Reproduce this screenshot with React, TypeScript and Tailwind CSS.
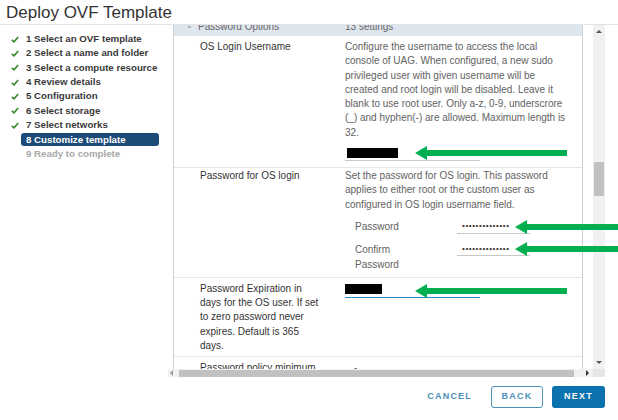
import React from "react";

const steps = [
  { label: "1 Select an OVF template", state: "done" },
  { label: "2 Select a name and folder", state: "done" },
  { label: "3 Select a compute resource", state: "done" },
  { label: "4 Review details", state: "done" },
  { label: "5 Configuration", state: "done" },
  { label: "6 Select storage", state: "done" },
  { label: "7 Select networks", state: "done" },
  { label: "8 Customize template", state: "active" },
  { label: "9 Ready to complete", state: "todo" },
];

const Check = () => (
  <svg width="8" height="7" viewBox="0 0 8 7" className="shrink-0">
    <path d="M0.8 3.8 L3 5.8 L7.2 1" fill="none" stroke="#3a8c2f" strokeWidth="1.7" />
  </svg>
);

// green annotation arrow pointing left
const Arrow = ({ width, className }: { width: number; className: string }) => (
  <svg width={width} height="14" viewBox={`0 0 ${width} 14`} className={`absolute ${className}`}>
    <polygon points="0,7 12,0 12,14" fill="#00b050" />
    <rect x="11" y="4" width={width - 11} height="6" fill="#00b050" />
  </svg>
);

const Dots = () => (
  <span className="text-[8px] tracking-[0.6px] text-[#333] leading-none">••••••••••••••</span>
);

export default function App() {
  return (
    <div className="relative w-[618px] h-[420px] overflow-hidden bg-white font-['Liberation_Sans',Arial,sans-serif] text-[#626262]">
      <div className="h-[25px] pl-[6px] text-[17px] leading-[25px] text-[#333] border-b border-[#e4e4e4]">
        Deploy OVF Template
      </div>

      <div className="flex h-[352px]">
        <nav className="w-[168px] pt-[7px]">
          {steps.map((s) =>
            s.state === "active" ? (
              <div key={s.label} className="h-[14.33px] flex items-center">
                <div className="ml-[21px] w-[138px] h-[13.5px] rounded-[3px] bg-[#1c4b78] pl-[5px] text-[9.7px] font-bold leading-[13.5px] text-white whitespace-nowrap">
                  {s.label}
                </div>
              </div>
            ) : (
              <div key={s.label} className="h-[14.33px] flex items-center pl-[11px] text-[9.7px] font-bold">
                {s.state === "done" ? <Check /> : <span className="w-[8px]" />}
                <span className={`ml-[7px] whitespace-nowrap ${s.state === "done" ? "text-[#3a3a3a]" : "text-[#a9a9a9]"}`}>
                  {s.label}
                </span>
              </div>
            )
          )}
        </nav>

        <div className="flex-1 flex flex-col">
          <div className="flex h-[344px]">
            <div className="ml-[5px] w-[410px] border-x border-[#cfcfcf] overflow-hidden text-[10px]">
              <div className="-mt-[9px]">
                <div className="h-[20px] bg-[#dfe7ee] flex items-center text-[#666]">
                  <span className="w-[24px] pl-[12px] text-[8px] text-[#888]">⌄</span>
                  <span className="w-[147px]">Password Options</span>
                  <span>13 settings</span>
                </div>

                <div className="grid grid-cols-[171px_1fr] pt-[4px] pb-[6px] border-b border-[#e6e6e6] leading-[14.3px]">
                  <div className="pl-[26px] text-[#333]">OS Login Username</div>
                  <div className="whitespace-nowrap">
                    <div>Configure the username to access the local</div>
                    <div>console of UAG. When configured, a new sudo</div>
                    <div>privileged user with given username will be</div>
                    <div>created and root login will be disabled. Leave it</div>
                    <div>blank to use root user. Only a-z, 0-9, underscrore</div>
                    <div>(_) and hyphen(-) are allowed. Maximum length is</div>
                    <div>32.</div>
                    <div className="mt-[6px] w-[135px] h-[15px] border-b border-[#c8c8c8] pt-[2px] pl-[2px]">
                      <div className="w-[51px] h-[10px] bg-black" />
                    </div>
                  </div>
                </div>

                <div className="grid grid-cols-[171px_1fr] pt-[1px] pb-[5px] border-b border-[#e6e6e6] leading-[14.3px]">
                  <div className="pl-[26px] text-[#333]">Password for OS login</div>
                  <div className="whitespace-nowrap">
                    <div>Set the password for OS login. This password</div>
                    <div>applies to either root or the custom user as</div>
                    <div>configured in OS login username field.</div>
                    <div className="mt-[8px] ml-[10px] flex flex-col gap-[9px]">
                      <div className="flex">
                        <div className="w-[102px]">Password</div>
                        <div className="w-[73px] h-[14px] border-b border-[#c8c8c8] pl-[5px] flex items-center">
                          <Dots />
                        </div>
                      </div>
                      <div className="flex">
                        <div className="w-[102px] whitespace-normal">
                          <div>Confirm</div>
                          <div>Password</div>
                        </div>
                        <div className="w-[73px] h-[13px] border-b border-[#c8c8c8] pl-[5px] flex items-center">
                          <Dots />
                        </div>
                      </div>
                    </div>
                  </div>
                </div>

                <div className="grid grid-cols-[171px_1fr] pt-[4px] pb-[3px] border-b border-[#e6e6e6] leading-[14.3px]">
                  <div className="pl-[26px] text-[#333] whitespace-nowrap">
                    <div>Password Expiration in</div>
                    <div>days for the OS user. If set</div>
                    <div>to zero password never</div>
                    <div>expires. Default is 365</div>
                    <div>days.</div>
                  </div>
                  <div>
                    <div className="w-[135px] h-[16px] border-b border-[#2d8bc4] pt-[2px]">
                      <div className="w-[37px] h-[10px] bg-black" />
                    </div>
                  </div>
                </div>

                <div className="grid grid-cols-[171px_1fr] pt-[4px] leading-[14.3px]">
                  <div className="pl-[26px] text-[#333] whitespace-nowrap">Password policy minimum</div>
                  <div className="pl-[9px]">-</div>
                </div>
              </div>
            </div>

            <div className="ml-[10px] w-[12px] bg-[#f1f1f1] flex flex-col items-center justify-between py-[5px]">
              <span className="w-0 h-0 border-x-[3px] border-x-transparent border-b-[3px] border-b-[#555]" />
              <div className="flex-1 w-full flex flex-col pt-[129px]">
                <div className="mx-[1px] h-[34px] bg-[#c1c1c1]" />
              </div>
              <span className="w-0 h-0 border-x-[3px] border-x-transparent border-t-[3px] border-t-[#555]" />
            </div>
          </div>

          <div className="flex h-[8px]">
            <div className="w-[425px] bg-[#f1f1f1] flex items-center pl-[2px] pr-[4px]">
              <span className="w-0 h-0 border-y-[3px] border-y-transparent border-r-[3px] border-r-[#999]" />
              <div className="ml-[6px] w-[395px] h-[7px] bg-[#c1c1c1]" />
              <span className="ml-auto w-0 h-0 border-y-[3px] border-y-transparent border-l-[3px] border-l-[#333]" />
            </div>
            <div className="w-[12px] bg-[#e6e6e6]" />
          </div>
        </div>
      </div>

      <div className="flex justify-end items-center pt-[9px] pr-[13px] gap-[9px] text-[9px] font-bold tracking-[1.2px]">
        <button className="h-[22px] px-[10px] text-[#4a90b8]">CANCEL</button>
        <button className="h-[22px] w-[52px] rounded-[3px] border border-[#4a90b8] text-[#4a90b8]">BACK</button>
        <button className="h-[22px] w-[53px] rounded-[3px] bg-[#0c72ae] text-white">NEXT</button>
      </div>

      <Arrow width={152} className="left-[415px] top-[146px]" />
      <Arrow width={103} className="left-[515px] top-[220px]" />
      <Arrow width={103} className="left-[515px] top-[242px]" />
      <Arrow width={152} className="left-[415px] top-[284px]" />
    </div>
  );
}
